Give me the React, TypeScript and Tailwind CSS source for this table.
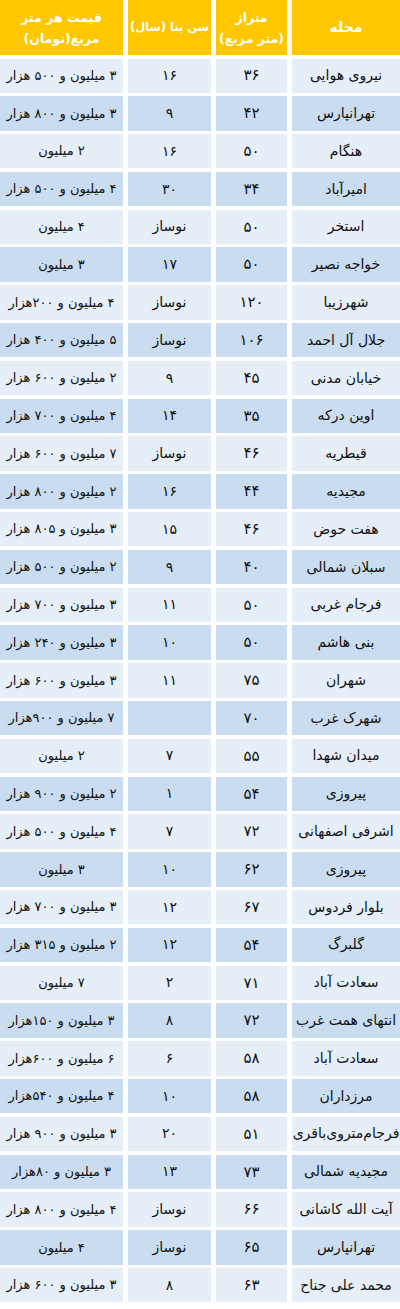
import React from "react";

type Row = [string, string, string, string];

const rows: Row[] = [
  ["نیروی هوایی", "۳۶", "۱۶", "۳ میلیون و ۵۰۰ هزار"],
  ["تهرانپارس", "۴۲", "۹", "۳ میلیون و ۸۰۰ هزار"],
  ["هنگام", "۵۰", "۱۶", "۲ میلیون"],
  ["امیرآباد", "۳۴", "۳۰", "۴ میلیون و ۵۰۰ هزار"],
  ["استخر", "۵۰", "نوساز", "۴ میلیون"],
  ["خواجه نصیر", "۵۰", "۱۷", "۳ میلیون"],
  ["شهرزیبا", "۱۲۰", "نوساز", "۴ میلیون و ۲۰۰هزار"],
  ["جلال آل احمد", "۱۰۶", "نوساز", "۵ میلیون و ۴۰۰ هزار"],
  ["خیابان مدنی", "۴۵", "۹", "۲ میلیون و ۶۰۰ هزار"],
  ["اوین درکه", "۳۵", "۱۴", "۴ میلیون و ۷۰۰ هزار"],
  ["قیطریه", "۴۶", "نوساز", "۷ میلیون و ۶۰۰ هزار"],
  ["مجیدیه", "۴۴", "۱۶", "۲ میلیون و ۸۰۰ هزار"],
  ["هفت حوض", "۴۶", "۱۵", "۳ میلیون و ۸۰۵ هزار"],
  ["سبلان شمالی", "۴۰", "۹", "۲ میلیون و ۵۰۰ هزار"],
  ["فرجام غربی", "۵۰", "۱۱", "۳ میلیون و ۷۰۰ هزار"],
  ["بنی هاشم", "۵۰", "۱۰", "۳ میلیون و ۲۴۰ هزار"],
  ["شهران", "۷۵", "۱۱", "۳ میلیون و ۶۰۰ هزار"],
  ["شهرک غرب", "۷۰", "", "۷ میلیون و ۹۰۰هزار"],
  ["میدان شهدا", "۵۵", "۷", "۲ میلیون"],
  ["پیروزی", "۵۴", "۱", "۲ میلیون و ۹۰۰ هزار"],
  ["اشرفی اصفهانی", "۷۲", "۷", "۴ میلیون و ۵۰۰ هزار"],
  ["پیروزی", "۶۲", "۱۰", "۳ میلیون"],
  ["بلوار فردوس", "۶۷", "۱۲", "۳ میلیون و ۷۰۰ هزار"],
  ["گلبرگ", "۵۴", "۱۲", "۲ میلیون و ۳۱۵ هزار"],
  ["سعادت آباد", "۷۱", "۲", "۷ میلیون"],
  ["انتهای همت غرب", "۷۲", "۸", "۳ میلیون و ۱۵۰هزار"],
  ["سعادت آباد", "۵۸", "۶", "۶ میلیون و ۶۰۰هزار"],
  ["مرزداران", "۵۸", "۱۰", "۴ میلیون و ۵۴۰هزار"],
  ["فرجام‌متروی‌باقری", "۵۱", "۲۰", "۳ میلیون و ۹۰۰ هزار"],
  ["مجیدیه شمالی", "۷۳", "۱۳", "۳ میلیون و ۸۰هزار"],
  ["آیت الله کاشانی", "۶۶", "نوساز", "۴ میلیون و ۸۰۰ هزار"],
  ["تهرانپارس", "۶۵", "نوساز", "۴ میلیون"],
  ["محمد علی جناح", "۶۳", "۸", "۳ میلیون و ۶۰۰ هزار"],
];

export default function App() {
  return (
    <div
      dir="rtl"
      className="w-[400px] h-[1309px] bg-white overflow-hidden"
      style={{ fontFamily: '"DejaVu Sans", "Noto Sans", sans-serif' }}
    >
      <div className="grid grid-cols-[108px_71px_83px_123px] grid-rows-[55px_repeat(33,34.3px)] gap-x-[5px] gap-y-[3.5px]">
        <div className="bg-[#FFC700] text-white text-[14px] font-bold flex items-center justify-center">
          محله
        </div>
        <div className="bg-[#FFC700] text-white text-[12.5px] font-bold flex flex-col items-center justify-center leading-[21px] whitespace-nowrap">
          <span>متراژ</span>
          <span>(متر مربع)</span>
        </div>
        <div className="bg-[#FFC700] text-white text-[11.5px] font-bold flex items-center justify-center whitespace-nowrap">
          سن بنا (سال)
        </div>
        <div className="bg-[#FFC700] text-white text-[12.5px] font-bold flex flex-col items-center justify-center leading-[21px] whitespace-nowrap">
          <span>قیمت هر متر</span>
          <span>مربع(تومان)</span>
        </div>
        {rows.map((r, i) => {
          const bg = i % 2 === 0 ? "bg-[#E6EEF8]" : "bg-[#C9DCF0]";
          return (
            <React.Fragment key={i}>
              <div className={`${bg} flex items-center justify-center text-[14px] text-[#111] whitespace-nowrap`}>
                {r[0]}
              </div>
              <div className={`${bg} flex items-center justify-center text-[15px] text-[#111]`}>
                {r[1]}
              </div>
              <div className={`${bg} flex items-center justify-center text-[14px] text-[#111]`}>
                {r[2]}
              </div>
              <div className={`${bg} flex items-center justify-center text-[13px] text-[#111] whitespace-nowrap`}>
                {r[3]}
              </div>
            </React.Fragment>
          );
        })}
      </div>
    </div>
  );
}
